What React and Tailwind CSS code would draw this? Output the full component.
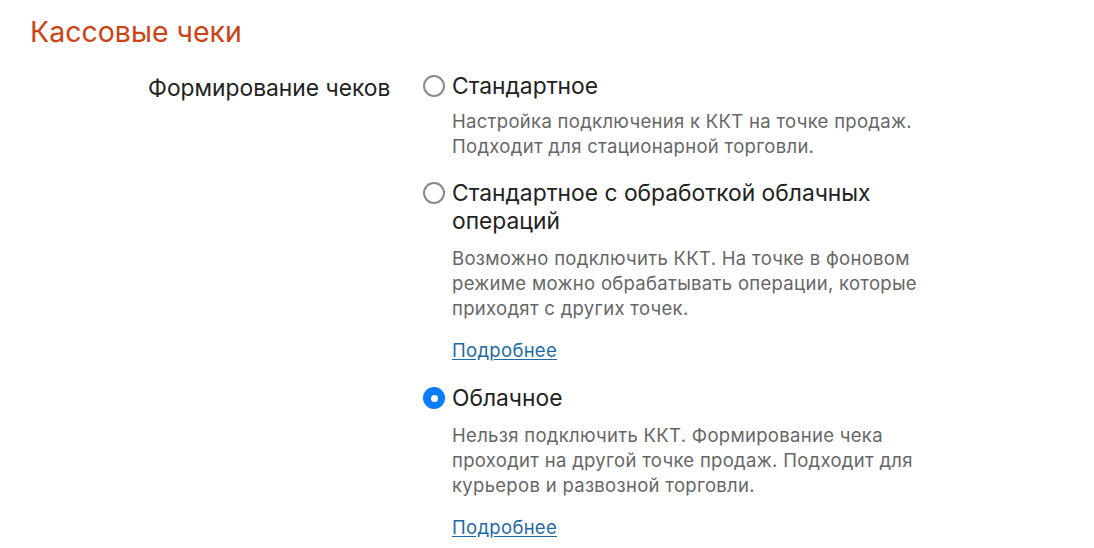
import React, { useState } from 'react';

const opcionesFormato = [
  {
    id: 'standard',
    titulo: 'Стандартное',
    texto: 'Настройка подключения к ККТ на точке продаж. Подходит для стационарной торговли.',
    link: false,
  },
  {
    id: 'standard-cloud',
    titulo: 'Стандартное с обработкой облачных операций',
    texto: 'Возможно подключить ККТ. На точке в фоновом режиме можно обрабатывать операции, которые приходят с других точек.',
    link: true,
  },
  {
    id: 'cloud',
    titulo: 'Облачное',
    texto: 'Нельзя подключить ККТ. Формирование чека проходит на другой точке продаж. Подходит для курьеров и развозной торговли.',
    link: true,
  },
];

function Radio({ checked }) {
  if (checked) {
    return (
      <span className="flex h-[22px] w-[22px] shrink-0 items-center justify-center rounded-full bg-[#0b7dfa]">
        <span className="block h-[7px] w-[7px] rounded-full bg-white" />
      </span>
    );
  }
  return <span className="block h-[22px] w-[22px] shrink-0 rounded-full border-[2.5px] border-[#8a8a8a] bg-white" />;
}

export default function App() {
  const [formato, setFormato] = useState('cloud');

  return (
    <main className="min-h-screen bg-white pl-[30px] pt-[15px] font-['Inter','Liberation_Sans',Arial,sans-serif]">
      <h1 className="text-[28.5px] leading-[34px] text-[#cc4314]">Кассовые чеки</h1>

      <div className="mt-[23px] flex">
        <div className="w-[393px] shrink-0 pl-[118px] pt-[2px] text-[22.8px] leading-[28px] text-[#222]">
          Формирование чеков
        </div>

        <div className="flex flex-col">
          {opcionesFormato.map((op, i) => (
            <div key={op.id} className={op.link ? 'mb-[21px]' : 'mb-[20px]'}>
              <label className="flex cursor-pointer items-start gap-[7px]" onClick={() => setFormato(op.id)}>
                <span className="pt-[3px]">
                  <Radio checked={formato === op.id} />
                </span>
                <span className="w-[440px] text-[22.8px] leading-[28px] text-[#222]">{op.titulo}</span>
              </label>
              <p className={(i === 0 ? 'mt-[9px] ' : 'mt-[11px] ') + 'w-[510px] pl-[29px] text-[18.5px] leading-[25px] tracking-[0.3px] text-[#666]'}>
                {op.texto}
              </p>
              {op.link && (
                <a href="#" className="mt-[17px] inline-block pl-[29px] text-[18.5px] leading-[25px] tracking-[0.3px] text-[#1f6aa5] underline underline-offset-2">
                  Подробнее
                </a>
              )}
            </div>
          ))}
        </div>
      </div>
    </main>
  );
}
